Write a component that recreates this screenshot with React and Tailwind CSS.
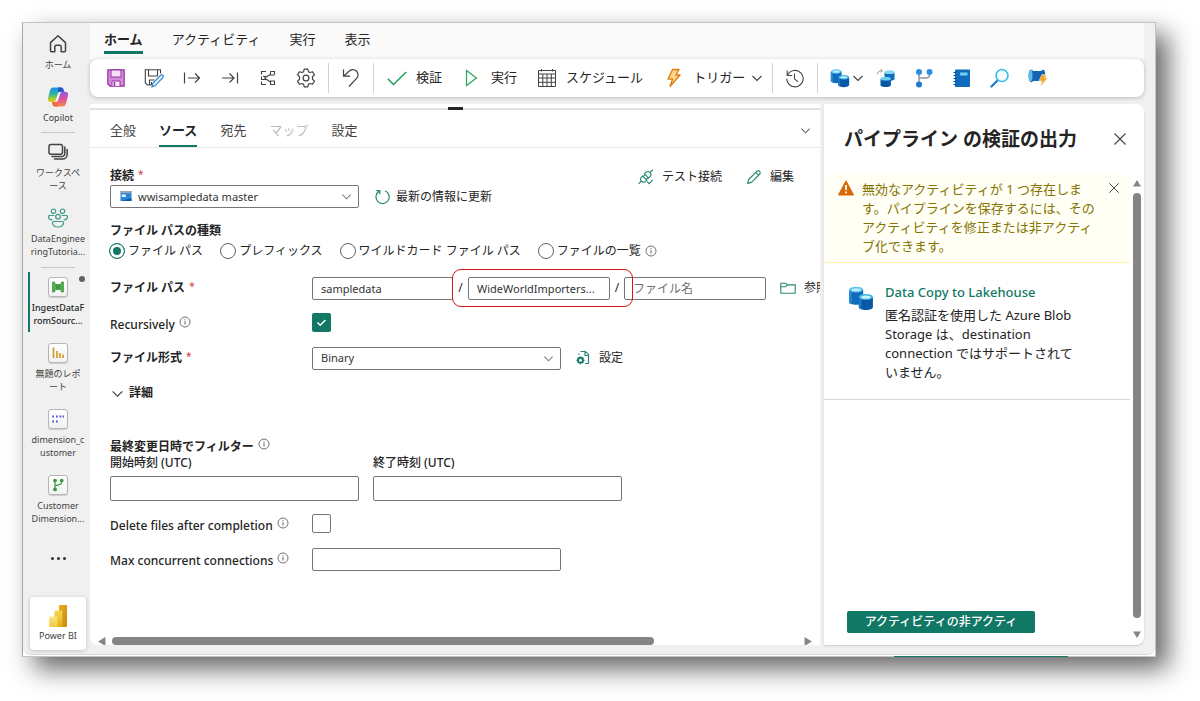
import React from "react";

const INK = "#424242";
const GREEN = "#117865";

function Svg({ size = 20, box = 20, children, className = "" }) {
  return (
    <svg width={size} height={size} viewBox={`0 0 ${box} ${box}`} fill="none" className={`shrink-0 ${className}`} aria-hidden="true">
      {children}
    </svg>
  );
}

const Chevron = ({ size = 12, color = INK }) => (
  <Svg size={size} box={12}>
    <path d="M1.5 4 6 8.5 10.5 4" stroke={color} strokeWidth="1.1" />
  </Svg>
);

const CloseIcon = ({ size = 14 }) => (
  <Svg size={size} box={14}>
    <path d="M1.5 1.5l11 11M12.5 1.5l-11 11" stroke={INK} strokeWidth="1.1" />
  </Svg>
);

const InfoIcon = () => (
  <Svg size={12} box={12}>
    <circle cx="6" cy="6" r="5" stroke="#616161" strokeWidth=".9" />
    <path d="M6 5.2v3.3M6 3.2v1.1" stroke="#616161" strokeWidth="1" />
  </Svg>
);

const HomeIcon = () => (
  <Svg>
    <path d="M2.5 8.6 10 1.8l7.500 6.800v8.200a1 1 0 0 1-1 1h-3.300v-5a1.500 1.500 0 0 0-1.500-1.500H8.300a1.500 1.500 0 0 0-1.500 1.500v5H3.500a1 1 0 0 1-1-1z" stroke={INK} strokeWidth="1.5" strokeLinejoin="round" />
  </Svg>
);

const CopilotIcon = () => (
  <Svg size={22} box={22}>
    <defs>
      <linearGradient id="cpA" x1="0" y1="0" x2="0" y2="1">
        <stop offset="0" stopColor="#1b8fe8" />
        <stop offset=".45" stopColor="#2bb59c" />
        <stop offset=".75" stopColor="#9ccc3c" />
        <stop offset="1" stopColor="#f5c21b" />
      </linearGradient>
      <linearGradient id="cpB" x1="0" y1="0" x2="0" y2="1">
        <stop offset="0" stopColor="#8f5be8" />
        <stop offset=".5" stopColor="#e0509c" />
        <stop offset="1" stopColor="#f58a4b" />
      </linearGradient>
    </defs>
    <path d="M6.500 1.500h7.500c1.500 0 2 .8 2.400 2l.7 2.300H13c-1.200 0-1.800.6-2.200 1.800L8.700 14.300c-.4 1.300-1 1.800-2.200 1.800H3.800C1.600 16.100.5 14.500 1 12.300L3 4.500c.5-2 1.500-3 3.500-3z" fill="url(#cpA)" />
    <path d="M11 1.500h3c1.500 0 2 .8 2.400 2l.7 2.300H13c-1 0-1.500.3-1.900 1z" fill="#2354c7" />
    <path d="M15.500 20.500H8c-1.500 0-2-.8-2.400-2l-.7-2.400H9c1.200 0 1.800-.6 2.200-1.800l2.100-6.700c.4-1.300 1-1.800 2.200-1.800h2.700c2.200 0 3.300 1.600 2.800 3.800l-2 7.900c-.5 2-1.500 3-3.500 3z" fill="url(#cpB)" />
    <path d="M11 20.500H8c-1.500 0-2-.8-2.400-2l-.7-2.400H9c1 0 1.500-.3 1.900-1z" fill="#f36b3f" />
  </Svg>
);

const WorkspaceIcon = () => (
  <Svg>
    <rect x="1" y="2.500" width="13.500" height="9.800" rx="2" stroke={INK} strokeWidth="1.500" />
    <path d="M4 14.600h9.500a3.300 3.300 0 0 0 3.300-3.300V5M6.500 17h8a4.600 4.600 0 0 0 4.600-4.600V7.500" stroke={INK} strokeWidth="1.500" strokeLinecap="round" />
  </Svg>
);

const PeopleIcon = () => (
  <Svg size={22} box={22}>
    <g stroke="#3a9c82" strokeWidth="1.200">
      <circle cx="6.500" cy="4.200" r="2.200" />
      <circle cx="15.500" cy="4.200" r="2.200" />
      <circle cx="11" cy="9.700" r="2.300" />
      <path d="M6.500 14.500h9a1 1 0 0 1 1 1c0 2.800-2.300 4.500-5.500 4.500s-5.500-1.700-5.500-4.500a1 1 0 0 1 1-1z" />
      <path d="M7.300 8.500H2.500a1 1 0 0 0-1 1c0 1.800 1.200 3.300 3.800 3.400M14.700 8.500h4.800a1 1 0 0 1 1 1c0 1.800-1.200 3.300-3.800 3.400" />
    </g>
  </Svg>
);

function Tile({ children }) {
  return (
    <span className="flex size-5 items-center justify-center rounded-[3px] border border-[#b5b5b5] bg-gradient-to-b from-white to-[#f2f2f2] shadow-[0_1px_1px_rgba(0,0,0,0.15)]">
      <Svg size={14} box={14}>{children}</Svg>
    </span>
  );
}

const PipelineTile = () => (
  <Tile>
    <path d="M1.500 2h2.200v10H1.500zM10.300 2h2.200v10h-2.200z" fill="#4fae4b" stroke="#2d8a32" strokeWidth=".6" />
    <path d="M4.200 3.500c1.400 1 4.200 1 5.600 0v7c-1.400-1-4.200-1-5.600 0z" fill="#3a9a3c" />
  </Tile>
);
const ReportTile = () => (
  <Tile>
    <path d="M2.500 1.500V12M6 5v7M9 7v5M12 8.500V12" stroke="#cf9a1c" strokeWidth="1.600" />
  </Tile>
);
const NotebookTile = () => (
  <Tile>
    <path d="M1.200 4.500H3M5 4.500h1.800M8.500 4.500h1.800M11.500 4.500h1.500M1.200 9.500H3M5 9.500h1.800" stroke="#5b57c9" strokeWidth="1.800" />
  </Tile>
);
const BranchTile = () => (
  <Tile>
    <path d="M4 3v8M10.500 3v2c0 2-3.500 1.500-6.500 3" stroke="#3a9a3c" strokeWidth="1.200" />
    <circle cx="4" cy="2.600" r="1.900" fill="#3a9a3c" />
    <circle cx="10.700" cy="2.600" r="1.900" fill="#3a9a3c" />
    <circle cx="4" cy="11.400" r="1.900" fill="#3a9a3c" />
  </Tile>
);

const PowerBiIcon = () => (
  <Svg size={24} box={24}>
    <defs>
      <linearGradient id="pbA" x1="0" y1="0" x2="1" y2="1">
        <stop offset="0" stopColor="#e8ad1c" />
        <stop offset="1" stopColor="#c98a0c" />
      </linearGradient>
      <linearGradient id="pbB" x1="0" y1="0" x2="0" y2="1">
        <stop offset="0" stopColor="#f6d751" />
        <stop offset="1" stopColor="#e6ad18" />
      </linearGradient>
      <linearGradient id="pbC" x1="0" y1="0" x2="0" y2="1">
        <stop offset="0" stopColor="#f9e589" />
        <stop offset="1" stopColor="#f0c93a" />
      </linearGradient>
    </defs>
    <rect x="13" y="1" width="8" height="22" rx=".8" fill="url(#pbA)" />
    <path d="M8.500 6.500h7a.8.8 0 0 1 .8.800V23H8z" fill="url(#pbB)" />
    <path d="M4 12.500h6.500a.8.800 0 0 1 .8.800V23H4a.8.800 0 0 1-.8-.8v-8.900a.8.800 0 0 1 .8-.8z" fill="url(#pbC)" />
  </Svg>
);

/* Toolbar icons */
const SaveIcon = () => (
  <Svg>
    <path d="M1.800 1.800h16.400v16.400H4L1.800 16z" fill="#d18bd8" stroke="#9a2fa3" strokeWidth="1.200" />
    <path d="M5 2h10v7H5z" fill="#f3e3f5" stroke="#9a2fa3" />
    <path d="M6 18v-5h8v5" fill="#f8eef9" stroke="#9a2fa3" />
    <path d="M8.500 14v4" stroke="#9a2fa3" strokeWidth="1.500" />
  </Svg>
);
const SaveEditIcon = () => (
  <Svg>
    <path d="M16.500 5.500V1.700H1.300v13.200L3.500 17h4M4.500 2v6h9V2M5.500 17v-5h5M7.500 14v3" stroke={INK} strokeWidth="1.100" />
    <path d="M8 18.800l1-3.800 7.800-7.800a1.400 1.400 0 0 1 2 2l-.2.800L11 17.800z" fill="#e4f1fb" stroke="#2f86cf" strokeWidth="1.200" />
  </Svg>
);
const ArrowFromIcon = () => (
  <Svg>
    <path d="M2.500 4.500v11M6 10h11.500M13 5.500l4.500 4.500-4.500 4.500" stroke={INK} strokeWidth="1.200" />
  </Svg>
);
const ArrowToIcon = () => (
  <Svg>
    <path d="M17.500 4.500v11M2 10h12M9.500 5.500 14 10l-4.500 4.500" stroke={INK} strokeWidth="1.200" />
  </Svg>
);
const LayoutIcon = () => (
  <Svg>
    <path d="M3.500 6.500V3.500h4.500M16.500 6.500V3.500h-4M3.500 13.500v3h4.500M16.500 16.500h-4v-3.500h4zM12.500 3.500v3.500h4M5 8.500h2v3h-3.500v-3M7 9.500l5.500-3M7 10.500l5.500 3.500" stroke={INK} strokeWidth="1.100" />
  </Svg>
);
const GearIcon = () => (
  <Svg>
    <path d="M8.200 1.200h3.600l.6 2.500 1.500.8 2.600-.8 2 3.200-2 1.800v2.600l2 1.800-2 3.200-2.600-.8-1.500.8-.6 2.500H8.200l-.6-2.500-1.500-.8-2.600.8-2-3.200 2-1.800V8.700l-2-1.800 2-3.200 2.600.8 1.500-.8z" stroke={INK} strokeWidth="1.200" strokeLinejoin="round" />
    <circle cx="10" cy="10" r="2.900" stroke={INK} strokeWidth="1.200" />
  </Svg>
);
const UndoIcon = () => (
  <Svg>
    <path d="M2.500 1.500v6.700h6.700M2.800 8 8 3.200a5.200 5.200 0 0 1 7.600 7.200L8 18.500" stroke={INK} strokeWidth="1.200" />
  </Svg>
);
const CheckIcon = () => (
  <Svg>
    <path d="M.8 10.800l5.700 5.700L19.200 4" stroke="#1f9d55" strokeWidth="1.500" />
  </Svg>
);
const PlayIcon = () => (
  <Svg>
    <path d="M4.500 2.500v15L14.500 10z" stroke="#2ea35f" strokeWidth="1.200" fill="#f6fcf8" />
  </Svg>
);
const TableIcon = () => (
  <Svg>
    <path d="M1.500 2.500h17v16h-17zM1.500 6h17M1.500 10h17M1.500 14.300h17M5.800 6v12.500M10 6v12.500M14.300 6v12.500M4.500 1v2.500M15.500 1v2.500" stroke={INK} strokeWidth="1" />
  </Svg>
);
const BoltIcon = () => (
  <Svg>
    <path d="M8.500 1.500h6.500l-3 5.500h4L6 18.500l2.500-7.300H4z" fill="#fbd58b" stroke="#e07b13" strokeWidth="1.300" strokeLinejoin="round" />
  </Svg>
);
const HistoryIcon = () => (
  <Svg>
    <path d="M2.200 2.500v5h5M2.500 7.300a8.200 8.200 0 1 1-.7 3.500M9.500 5.500v5.300l3.500 3" stroke={INK} strokeWidth="1.100" />
  </Svg>
);

function Cylinders({ size }) {
  return (
    <Svg size={size} box={24}>
      <path d="M1 4.500v11.200c0 1.500 3 2.600 6.500 2.600s6.500-1.100 6.500-2.600V4.500z" fill="#0f6cbd" />
      <path d="M1 4.500v11.200c0 .8.900 1.500 2.300 2V5z" fill="#2b88d8" />
      <ellipse cx="7.500" cy="4.200" rx="6.500" ry="2.700" fill="#5fc3ee" />
      <ellipse cx="7.500" cy="4.400" rx="4.300" ry="1.400" fill="#b8ecfb" />
      <path d="M10 11.500v9c0 1.400 3 2.500 6.500 2.500s6.500-1.100 6.500-2.500v-9z" fill="#0a57a4" />
      <path d="M10 11.500v9c0 .8.900 1.500 2.300 1.900V12z" fill="#1b7acb" />
      <ellipse cx="16.500" cy="11" rx="6.500" ry="2.700" fill="#3fb4e6" />
      <ellipse cx="16.500" cy="11.200" rx="4.300" ry="1.400" fill="#c6f1fc" />
    </Svg>
  );
}
const DatasetIcon = () => (
  <Svg>
    <path d="M8.500 4.500v6.500c0 1 2.300 1.800 5 1.800s5-.8 5-1.800V4.500z" fill="#0f6cbd" />
    <ellipse cx="13.500" cy="4.200" rx="5" ry="1.900" fill="#86d8f5" />
    <path d="M4.500 11v6.200c0 1 2.400 1.900 5.200 1.900s5.200-.9 5.200-1.900V11z" fill="#0a57a4" />
    <ellipse cx="9.700" cy="10.700" rx="5.200" ry="1.900" fill="#6fd0f2" />
    <path d="M1.500 6.500C1.500 4 3 2.700 6 2.700M4.500 1l1.800 1.700L4.500 4.500" stroke="#9a9a9a" strokeWidth="1" />
  </Svg>
);
const BranchIcon = () => (
  <Svg>
    <path d="M5 4v12.500M15.500 5v2.500c0 2.800-3 2.500-10.500 2.500" stroke="#8a98a8" strokeWidth="1.500" />
    <circle cx="5" cy="4" r="3" fill="#2f8be0" />
    <circle cx="15.500" cy="4" r="3" fill="#2f8be0" />
    <circle cx="5" cy="16.500" r="3" fill="#1e78d0" />
  </Svg>
);
const NotebookIcon = () => (
  <Svg>
    <rect x="3" y="1.500" width="15" height="17.500" rx="1" fill="#0f6cbd" />
    <rect x="8" y="4.500" width="7.500" height="3" fill="#74cdf2" />
    <path d="M1.500 4.500H4M1.500 7.500H4M1.500 10.500H4M1.500 13.500H4M1.500 16.500H4" stroke="#0a4a8c" strokeWidth="1.200" />
  </Svg>
);
const SearchIcon = () => (
  <Svg>
    <path d="M7.500 12.500 1.500 18.500" stroke="#1478c8" strokeWidth="2.200" strokeLinecap="round" />
    <circle cx="12" cy="7.500" r="6" stroke="#38bde8" strokeWidth="1.600" fill="#f5fcff" />
  </Svg>
);
const SpoolIcon = () => (
  <Svg>
    <path d="M1.500 2.200c1.500-1 3-.5 3.500.8h8.500c.3-1.300 1.700-1.800 2.700-.8 1.500 2 1.500 9.500 0 11.500-1 1-2.400.5-2.700-.7H5c-.5 1.500-2.200 1.700-3.200.6C.3 11.500.3 4 1.500 2.200z" fill="#1565b5" />
    <path d="M1.500 2.200C2.700 1.400 4 1.800 4.200 3.300s.4 6.500 0 8.300-1.600 2.500-2.400 1.700C.3 11.500.3 4 1.500 2.200z" fill="#5cbdec" />
    <path d="M14 6.500h4.500L16.500 10h3.200L12 19l2-6.200h-3z" fill="#f6a821" stroke="#fff" strokeWidth=".5" />
  </Svg>
);

const ServerIcon = () => (
  <Svg size={12} box={12}>
    <rect x=".5" y="1" width="11" height="10" fill="#2b88d8" />
    <rect x=".5" y="1" width="11" height="2.200" fill="#8fa6b8" />
    <path d="M1.800 4.500h4v2.500h-4z" fill="#e6f3fc" />
    <path d="M1.500 11 11.500 8v3z" fill="#0d5aa7" />
  </Svg>
);
const RefreshIcon = () => (
  <Svg size={16} box={16}>
    <path d="M10 1.800a6.600 6.600 0 1 1-5.500.3M1.200 1.700h3.600v3.600" stroke="#2a8a74" strokeWidth="1.200" />
  </Svg>
);
const PlugIcon = () => (
  <Svg size={16} box={16}>
    <g stroke="#2a8a74" strokeWidth="1.100" strokeLinecap="round">
      <path d="M1 14.500l2.300-2.300M12 3.500l2.500-2.500M6.500 4.800l4.200 4.200 1.600-1.600a3 3 0 0 0-4.200-4.200zM8.800 11.200 4.500 7 3.200 8.300a3 3 0 0 0 4.200 4.200zM5.200 7.700l2-2M8.200 10.500l2-2" />
      <path d="M9.500 13l1.700 1.700 3.300-3.500" />
    </g>
  </Svg>
);
const PencilIcon = () => (
  <Svg size={16} box={16}>
    <path d="M1.700 14.300l1-3.800 8.300-8.300a2 2 0 0 1 2.800 2.800l-8.300 8.300zM9.800 3.400l2.800 2.800" stroke="#2a8a74" strokeWidth="1.200" strokeLinejoin="round" />
  </Svg>
);
const FolderIcon = () => (
  <Svg size={16} box={16}>
    <path d="M.8 3.200h5l1.500 1.700h7.900v8.300H.8zM.8 6.800h5l1.500-1.900" stroke="#2a8a74" strokeWidth="1.100" />
  </Svg>
);
const FormatIcon = () => (
  <Svg size={16} box={16}>
    <path d="M4 5V3.500M5.500 1.500h5L13.500 4.500v9H10M10 1.500V5.500h3.500" stroke="#2a8a74" strokeWidth="1.200" />
    <circle cx="5.500" cy="10.200" r="2.400" stroke={GREEN} strokeWidth="1.800" />
    <path d="M5.500 6.200v1.600M5.500 12.600v1.600M1.500 10.200h1.600M7.900 10.200h1.600M2.700 7.400l1.100 1.100M7.200 11.900l1.100 1.100M8.300 7.400 7.200 8.500M3.800 11.900 2.700 13" stroke={GREEN} strokeWidth="1.400" />
  </Svg>
);
const WarningIcon = () => (
  <Svg size={16} box={16}>
    <path d="M8 .8 15.600 15H.4z" fill="#d8690a" stroke="#d8690a" strokeLinejoin="round" />
    <path d="M8 5v5M8 11.500v1.800" stroke="#fff" strokeWidth="1.800" />
  </Svg>
);

function NavItem({ icon, lines, className = "", labelClass = "text-[#424242]" }) {
  return (
    <button type="button" className={`flex flex-col items-center pt-[4px] ${className}`}>
      <span className="flex h-[22px] items-center">{icon}</span>
      <span className={`mt-[3px] text-[9px] leading-[13px] whitespace-nowrap ${labelClass}`}>
        {lines.map((line) => (
          <span key={line} className="block">{line}</span>
        ))}
      </span>
    </button>
  );
}

function Sidebar() {
  return (
    <nav aria-label="メイン" className="flex w-[67px] shrink-0 flex-col pt-[6px] pl-[3px] pb-[4px]">
      <NavItem icon={<HomeIcon />} lines={["ホーム"]} className="h-[53px]" />
      <NavItem icon={<CopilotIcon />} lines={["Copilot"]} className="h-[50px]" />
      <hr className="mx-auto mb-[4px] w-[34px] border-[#c8c8c8]" />
      <NavItem icon={<WorkspaceIcon />} lines={["ワークスペ", "ース"]} className="h-[66px]" />
      <NavItem icon={<PeopleIcon />} lines={["DataEnginee", "ringTutoria..."]} className="h-[64px]" />
      <hr className="mx-auto mb-[4px] w-[34px] border-[#c8c8c8]" />
      <div className="relative flex flex-col">
        <NavItem icon={<PipelineTile />} lines={["IngestDataF", "romSourc..."]} className="h-[66px]" labelClass="font-medium text-[#242424]" />
        <span className="absolute top-0 left-[2px] h-[60px] w-[2px] bg-[#117865]" />
        <span className="absolute top-[4px] right-[5px] size-[6px] rounded-full bg-[#616161]" />
      </div>
      <NavItem icon={<ReportTile />} lines={["無題のレポ", "ート"]} className="h-[66px]" />
      <NavItem icon={<NotebookTile />} lines={["dimension_c", "ustomer"]} className="h-[66px]" />
      <NavItem icon={<BranchTile />} lines={["Customer", "Dimension..."]} className="h-[66px]" />
      <button type="button" aria-label="その他" className="flex h-[44px] items-center justify-center gap-[3px]">
        <span className="size-[3px] rounded-full bg-[#333]" />
        <span className="size-[3px] rounded-full bg-[#333]" />
        <span className="size-[3px] rounded-full bg-[#333]" />
      </button>
      <button type="button" className="mx-auto mt-auto flex h-[53px] w-[56px] flex-col items-center rounded bg-white pt-[7px] text-[9px] leading-[13px] text-[#424242] shadow-[0_1px_4px_rgba(0,0,0,0.2)]">
        <PowerBiIcon />
        <span className="mt-px">Power BI</span>
      </button>
    </nav>
  );
}

function ToolButton({ label, children }) {
  return (
    <button type="button" aria-label={label} className="flex h-full w-[38px] shrink-0 items-center justify-center">
      {children}
    </button>
  );
}
function ToolText({ icon, children, after, pad = "px-[10px]" }) {
  return (
    <button type="button" className={`flex h-full shrink-0 items-center gap-[9px] text-[13px] whitespace-nowrap text-[#242424] ${pad}`}>
      {icon}
      <span className="flex items-center gap-[6px]">{children}{after}</span>
    </button>
  );
}
const Divider = () => (
  <span className="flex w-[7px] shrink-0 justify-center">
    <span className="h-[30px] w-px bg-[#d1d1d1]" />
  </span>
);

function Toolbar() {
  return (
    <div role="toolbar" aria-label="パイプライン" className="relative flex h-[38px] items-center rounded-lg bg-white pl-[7px] shadow-[0_1px_4px_rgba(0,0,0,0.22)]">
      <ToolButton label="保存"><SaveIcon /></ToolButton>
      <ToolButton label="名前を付けて保存"><SaveEditIcon /></ToolButton>
      <ToolButton label="インポート"><ArrowFromIcon /></ToolButton>
      <ToolButton label="エクスポート"><ArrowToIcon /></ToolButton>
      <ToolButton label="レイアウト"><LayoutIcon /></ToolButton>
      <ToolButton label="設定"><GearIcon /></ToolButton>
      <Divider />
      <ToolButton label="元に戻す"><UndoIcon /></ToolButton>
      <Divider />
      <ToolText icon={<CheckIcon />}>検証</ToolText>
      <ToolText icon={<PlayIcon />}>実行</ToolText>
      <ToolText icon={<TableIcon />}>スケジュール</ToolText>
      <ToolText icon={<BoltIcon />} after={<Chevron />} pad="pr-[6px] pl-[11px]">トリガー</ToolText>
      <Divider />
      <ToolButton label="履歴"><HistoryIcon /></ToolButton>
      <Divider />
      <button type="button" aria-label="データのコピー" className="flex h-full shrink-0 items-center gap-[2px] pr-[3px] pl-[9px]">
        <Cylinders size={20} />
        <Chevron />
      </button>
      <ToolButton label="データセット"><DatasetIcon /></ToolButton>
      <ToolButton label="データフロー"><BranchIcon /></ToolButton>
      <ToolButton label="ノートブック"><NotebookIcon /></ToolButton>
      <ToolButton label="検索"><SearchIcon /></ToolButton>
      <ToolButton label="パイプラインの呼び出し"><SpoolIcon /></ToolButton>
    </div>
  );
}

function RibbonTabs() {
  return (
    <div role="tablist" className="flex h-[36px] items-start gap-[29px] bg-[#fafafa] pt-[4px] pl-[14px] text-[13px] leading-[24px] text-[#242424]">
      <button type="button" role="tab" aria-selected="true" className="border-b-[3px] border-[#117865] font-bold">ホーム</button>
      <button type="button" role="tab">アクティビティ</button>
      <button type="button" role="tab">実行</button>
      <button type="button" role="tab">表示</button>
    </div>
  );
}

function Label({ children, htmlFor, required, info, className = "" }) {
  return (
    <label htmlFor={htmlFor} className={`flex shrink-0 gap-1 whitespace-nowrap ${info ? "pt-1 font-medium" : "font-semibold"} ${className}`}>
      <span>{children}</span>
      {required && <span className="text-[10px] leading-[14px] font-normal text-[#d13438]">*</span>}
      {info && <InfoIcon />}
    </label>
  );
}

const FIELD = "rounded-[2px] border border-[#767676] bg-white text-[11px] text-[#333] outline-none placeholder:text-[12px]";

function Radio({ id, children, defaultChecked }) {
  return (
    <span className="flex items-center gap-[3px]">
      <input
        id={id}
        type="radio"
        name="pathType"
        defaultChecked={defaultChecked}
        className="size-4 appearance-none rounded-full border border-[#616161] bg-white checked:border-[#117865] checked:bg-[#117865] checked:shadow-[inset_0_0_0_3px_#fff]"
      />
      <label htmlFor={id} className="whitespace-nowrap">{children}</label>
    </span>
  );
}

function SelectBox({ id, value, icon }) {
  return (
    <span className="relative flex w-[249px] shrink-0">
      <select id={id} defaultValue={value} className={`h-[23px] w-full appearance-none ${icon ? "pl-[27px]" : "pl-[8px]"} ${FIELD}`}>
        <option>{value}</option>
      </select>
      {icon && <span className="pointer-events-none absolute top-[5px] left-[10px]">{icon}</span>}
      <span className="pointer-events-none absolute top-[6px] right-[7px]"><Chevron size={11} color="#7a7a7a" /></span>
    </span>
  );
}

function LinkButton({ icon, children, gap = "gap-2" }) {
  return (
    <button type="button" className={`flex shrink-0 items-center whitespace-nowrap ${gap}`}>
      {icon}
      {children}
    </button>
  );
}

function SourceForm() {
  return (
    <form className="flex min-h-0 flex-1 flex-col overflow-hidden pt-[19px] pl-5 text-[12px] leading-[18px] text-[#242424]">
      <div className="flex items-start">
        <div>
          <Label htmlFor="conn" required className="h-[18px]">接続</Label>
          <div className="flex items-center gap-4">
            <SelectBox id="conn" value="wwisampledata master" icon={<ServerIcon />} />
            <LinkButton icon={<RefreshIcon />} gap="gap-[5px]">最新の情報に更新</LinkButton>
          </div>
        </div>
        <div className="ml-auto flex gap-6 pt-px pr-[26px]">
          <LinkButton icon={<PlugIcon />}>テスト接続</LinkButton>
          <LinkButton icon={<PencilIcon />}>編集</LinkButton>
        </div>
      </div>

      <fieldset className="mt-[14px]">
        <legend className="font-semibold">ファイル パスの種類</legend>
        <div className="-ml-px flex h-[22px] items-center gap-[17px]">
          <Radio id="r1" defaultChecked>ファイル パス</Radio>
          <Radio id="r2">プレフィックス</Radio>
          <Radio id="r3">ワイルドカード ファイル パス</Radio>
          <span className="flex items-center gap-1">
            <Radio id="r4">ファイルの一覧</Radio>
            <InfoIcon />
          </span>
        </div>
      </fieldset>

      <div className="mt-[15px] flex h-[22px] items-center">
        <Label htmlFor="container" required className="w-[202px]">ファイル パス</Label>
        <input id="container" defaultValue="sampledata" className={`h-[23px] w-[141px] shrink-0 px-[8px] ${FIELD}`} />
        <span className="w-[15px] shrink-0 text-center">/</span>
        <span className="relative flex shrink-0">
          <input aria-label="ディレクトリ" defaultValue="WideWorldImporters..." className={`h-[23px] w-[142px] px-[8px] ${FIELD}`} />
          <span className="pointer-events-none absolute top-[-8px] left-[-16px] z-10 h-[38px] w-[181px] rounded-[9px] border border-[#d9141b]" />
        </span>
        <span className="w-[14px] shrink-0 text-center">/</span>
        <input aria-label="ファイル名" placeholder="ファイル名" className={`h-[23px] w-[142px] shrink-0 px-[8px] placeholder:text-[#707070] ${FIELD}`} />
        <span className="ml-[14px] flex"><LinkButton icon={<FolderIcon />}>参照</LinkButton></span>
      </div>

      <div className="mt-[14px] flex h-[19px] items-center">
        <Label htmlFor="rec" info className="w-[202px]">Recursively</Label>
        <span className="relative flex">
          <input id="rec" type="checkbox" defaultChecked className="size-[19px] appearance-none rounded-[2px] bg-[#117865]" />
          <span className="pointer-events-none absolute top-[4px] left-[4px]">
            <Svg size={11} box={11}><path d="M1.500 5.500l2.700 2.700L9.500 3" stroke="#fff" strokeWidth="1.500" /></Svg>
          </span>
        </span>
      </div>

      <div className="mt-[15px] flex h-[22px] items-center">
        <Label htmlFor="fmt" required className="w-[202px]">ファイル形式</Label>
        <SelectBox id="fmt" value="Binary" />
        <span className="ml-[14px] flex"><LinkButton icon={<FormatIcon />}>設定</LinkButton></span>
      </div>

      <button type="button" className="mt-[14px] flex h-5 items-center gap-[5px] pl-px font-bold">
        <Chevron size={13} />
        詳細
      </button>

      <fieldset className="mt-[35px]">
        <legend className="flex gap-1 leading-[17px] font-semibold">最終変更日時でフィルター<InfoIcon /></legend>
        <div className="flex gap-[14px]">
          <span className="flex flex-col gap-[5px]">
            <label htmlFor="start" className="leading-[16px] font-medium">開始時刻 (UTC)</label>
            <input id="start" className={`h-[25px] w-[249px] px-2 ${FIELD}`} />
          </span>
          <span className="flex flex-col gap-[5px]">
            <label htmlFor="end" className="leading-[16px] font-medium">終了時刻 (UTC)</label>
            <input id="end" className={`h-[25px] w-[249px] px-2 ${FIELD}`} />
          </span>
        </div>
      </fieldset>

      <div className="mt-[13px] flex h-[19px] items-center">
        <Label htmlFor="del" info className="w-[202px]">Delete files after completion</Label>
        <input id="del" type="checkbox" className="size-[19px] appearance-none rounded-[2px] border border-[#767676] bg-white" />
      </div>
      <div className="mt-[15px] flex h-[22px] items-center">
        <Label htmlFor="max" info className="w-[202px]">Max concurrent connections</Label>
        <input id="max" className={`h-[23px] w-[249px] px-2 ${FIELD}`} />
      </div>
    </form>
  );
}

function SourcePanel() {
  return (
    <section className="flex min-w-0 flex-1 flex-col overflow-hidden rounded-bl-lg bg-white">
      <div className="flex h-[6px] shrink-0 justify-center border-b-2 border-[#e0e0e0] pt-[3px]">
        <span className="h-[3px] w-[15px] bg-[#242424]" />
      </div>
      <div role="tablist" className="flex h-[38px] shrink-0 items-stretch gap-[23px] border-b border-[#e8e8e8] pr-[9px] pl-5 text-[13px] text-[#424242]">
        <button type="button" role="tab" className="pt-1">全般</button>
        <button type="button" role="tab" aria-selected="true" className="border-b-2 border-[#117865] pt-[6px] font-bold text-[#242424]">ソース</button>
        <button type="button" role="tab" className="pt-1">宛先</button>
        <button type="button" role="tab" disabled className="pt-1 text-[#bdbdbd]">マップ</button>
        <button type="button" role="tab" className="pt-1">設定</button>
        <button type="button" aria-label="折りたたむ" className="ml-auto pt-1"><Chevron size={11} color="#616161" /></button>
      </div>
      <SourceForm />
      <div className="flex h-[8px] shrink-0 items-center gap-[6px] px-[7px]">
        <Svg size={9} box={8}><path d="M7.500 0v8L1 4z" fill="#858585" /></Svg>
        <span className="flex h-full flex-1">
          <span className="h-[8px] w-[79%] rounded-full bg-[#858585]" />
        </span>
        <Svg size={9} box={8}><path d="M.5 0v8L7 4z" fill="#858585" /></Svg>
      </div>
    </section>
  );
}

function OutputPanel() {
  return (
    <aside className="flex w-[320px] shrink-0 flex-col rounded-tr-lg rounded-br-lg bg-white shadow-[0_1px_2px_rgba(0,0,0,0.15)]">
      <header className="flex h-[70px] shrink-0 items-center justify-between pr-[17px] pl-5">
        <h2 className="text-[19px] font-bold whitespace-nowrap text-[#242424]">パイプライン の検証の出力</h2>
        <button type="button" aria-label="閉じる"><CloseIcon /></button>
      </header>
      <div className="flex min-h-0 flex-1">
        <div className="flex min-w-0 flex-1 flex-col">
          <div role="alert" className="flex h-[89px] items-start border-b border-[#fdf3a7] bg-[#fffff5] pt-[6px] pr-[10px] pl-[14px]">
            <span className="flex pr-[8px]"><WarningIcon /></span>
            <p className="text-[13px] leading-[19px] whitespace-nowrap text-[#857400]">
              無効なアクティビティが 1 つ存在しま<br />す。パイプラインを保存するには、その<br />アクティビティを修正または非アクティ<br />ブ化できます。
            </p>
            <button type="button" aria-label="通知を閉じる" className="ml-auto pt-[2px]"><CloseIcon size={12} /></button>
          </div>
          <article className="flex gap-[11px] border-b border-[#d6d6d6] pt-[20px] pb-[17px] pl-[24px]">
            <span className="flex pt-[2px]"><Cylinders size={26} /></span>
            <div className="text-[13px] leading-[19px] whitespace-nowrap text-[#242424]">
              <a href="#activity" className="block pb-[4px] font-medium text-[#117865]">Data Copy to Lakehouse</a>
              <p>匿名認証を使用した Azure Blob<br />Storage は、destination<br />connection ではサポートされて<br />いません。</p>
            </div>
          </article>
          <button type="button" className="mt-auto mb-3 ml-[23px] h-[22px] w-[188px] rounded-[2px] bg-[#117865] text-[12px] font-medium whitespace-nowrap text-white">
            アクティビティの非アクティ
          </button>
        </div>
        <div className="flex w-[14px] flex-col items-center gap-[6px] pt-[5px] pb-[6px]">
          <Svg size={8} box={8}><path d="M0 7.500h8L4 1z" fill="#858585" /></Svg>
          <span className="w-[8px] flex-1 rounded-full bg-[#858585]" />
          <Svg size={8} box={8} className="mt-[7px]"><path d="M0 .5h8L4 7z" fill="#858585" /></Svg>
        </div>
      </div>
    </aside>
  );
}

export default function App() {
  return (
    <div
      lang="ja"
      className="flex min-h-screen bg-white pt-[22px] pr-[44px] pb-[44px] pl-[22px] font-['Noto_Sans','Noto_Sans_CJK_JP',sans-serif]"
    >
      <div className="relative flex min-w-0 flex-1 border border-[#c4c4c4] border-l-[#a8a8a8] bg-white pb-px shadow-[12px_12px_24px_rgba(0,0,0,0.6)]">
        <div className="flex min-w-0 flex-1 overflow-hidden rounded-b-lg border-b border-[#d8d8d8] bg-[#f0f0f0]">
          <Sidebar />
          <main className="flex min-w-0 flex-1 flex-col pr-[11px] pb-[9px]">
            <RibbonTabs />
            <Toolbar />
            <div className="mt-[7px] flex min-h-0 flex-1 gap-1">
              <SourcePanel />
              <OutputPanel />
            </div>
          </main>
        </div>
        <span className="absolute right-[87px] -bottom-px h-px w-[174px] bg-[#117865]" />
      </div>
    </div>
  );
}
